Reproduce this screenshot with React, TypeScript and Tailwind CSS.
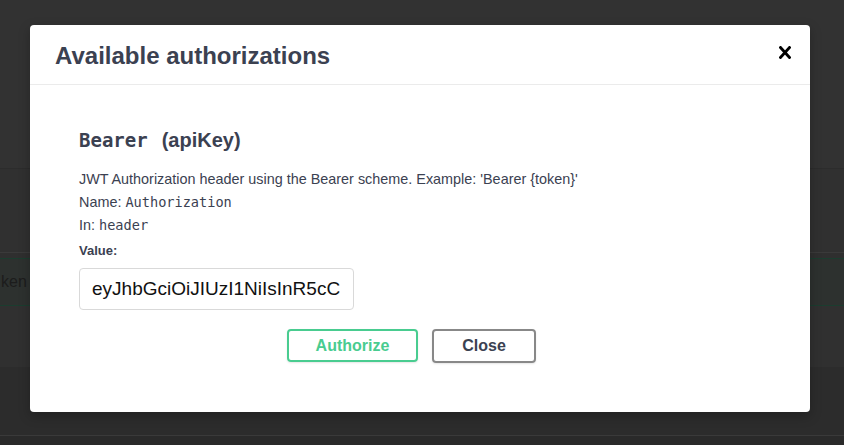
import React from "react";

const sans = { fontFamily: '"Liberation Sans", Arial, sans-serif' };
const mono = { fontFamily: '"DejaVu Sans Mono", "Liberation Mono", monospace' };

function CloseIcon() {
  return (
    <svg width="12" height="13" viewBox="0 0 12 13" className="block">
      <path d="M1.5 1.5 L10.5 11.5 M10.5 1.5 L1.5 11.5" stroke="#000" strokeWidth="2.8" strokeLinecap="square" />
    </svg>
  );
}

export default function App() {
  return (
    <div className="relative w-[844px] h-[445px] overflow-hidden bg-[#323232]" style={sans}>
      {/* --- dimmed page behind the dialog --- */}
      <div className="flex flex-col">
        <div className="h-[168px] bg-[#323232]" />
        <div className="h-[84px] bg-[#303030] border-t border-[#2c2c2c]" />
        <div className="h-[6px] bg-[#2f2f2f] border-t border-[#3a3a3a]" />
        <div className="h-[48px] bg-[#2d312f] border-y border-[#1b3d2f] flex items-center">
          <span className="text-[16px] text-[#1c1c1c] pl-[1px]">ken</span>
        </div>
        <div className="h-[61px] bg-[#303030]" />
        <div className="h-[68px] bg-[#2c2c2c]" />
        <div className="h-[10px] bg-[#2a2a2a] border-t border-[#3a3a3a]" />
      </div>

      {/* --- Available authorizations dialog --- */}
      <div className="absolute left-[30px] top-[25px] w-[780px] h-[387px] bg-white rounded-[4px] shadow-[0_4px_12px_rgba(0,0,0,0.25)] text-[#3b4151]">
        <div className="h-[60px] flex items-center justify-between pl-[25px] pr-[19px] border-b border-[#ebebeb]">
          <h3 className="text-[24px] font-bold leading-none pt-[2px]">Available authorizations</h3>
          <button className="pb-[5px]">
            <CloseIcon />
          </button>
        </div>

        <div className="pl-[49px] pt-[43px]">
          <h4 className="flex items-baseline h-[24px] leading-[24px]">
            <code className="text-[19px] font-bold" style={mono}>Bearer</code>
            <span className="ml-[14px] text-[20px] font-bold">(apiKey)</span>
          </h4>

          <div className="mt-[16px] text-[14.4px] leading-[23px]">
            <p>JWT Authorization header using the Bearer scheme. Example: 'Bearer {"{token}"}'</p>
            <p>
              Name: <code className="text-[13.6px]" style={mono}>Authorization</code>
            </p>
            <p>
              In: <code className="text-[13.6px]" style={mono}>header</code>
            </p>
          </div>

          <label className="block mt-[6px] text-[13px] leading-[16px] font-bold">Value:</label>
          <div className="mt-[9px] w-[275px] h-[42px] border border-[#d9d9d9] rounded-[4px] flex items-center pl-[12px] overflow-hidden">
            <span className="text-[19px] text-[#111] whitespace-nowrap">eyJhbGciOiJIUzI1NiIsInR5cC</span>
          </div>

          <div className="mt-[19px] ml-[208px] flex gap-[14px]">
            <button className="w-[131px] h-[33px] border-2 border-[#49cc90] rounded-[4px] text-[16px] font-bold text-[#49cc90] shadow-[0_1px_2px_rgba(0,0,0,0.1)]">
              Authorize
            </button>
            <button className="w-[104px] h-[34px] border-2 border-[#888888] rounded-[4px] text-[16px] font-bold text-[#3b4151] shadow-[0_1px_2px_rgba(0,0,0,0.1)]">
              Close
            </button>
          </div>
        </div>
      </div>
    </div>
  );
}
